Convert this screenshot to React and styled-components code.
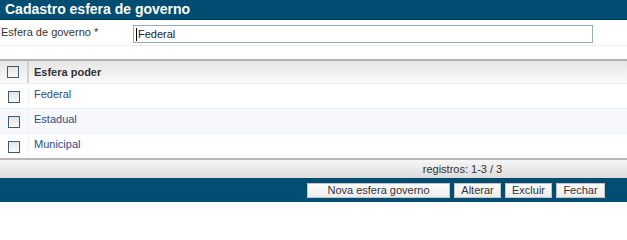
import React from 'react';
import styled, { createGlobalStyle } from 'styled-components';

const GlobalStyle = createGlobalStyle`
  body {
    margin: 0;
    background: #fff;
    font-family: "Liberation Sans", Arial, sans-serif;
    font-size: 11px;
    color: #333;
  }
`;

const Page = styled.div`
  width: 627px;
  display: flex;
  flex-direction: column;
`;

const TitleBar = styled.div`
  height: 19px;
  background: #024e73;
  border-bottom: 1px solid #013a57;
  color: #fff;
  font-weight: bold;
  font-size: 14px;
  line-height: 19px;
  padding-left: 5px;
`;

const FormRow = styled.div`
  display: flex;
  align-items: flex-start;
  height: 25px;
  padding-top: 4px;
  box-sizing: border-box;
  border-bottom: 1px solid #eeeeee;
  margin-top: 1px;
`;

const Label = styled.div`
  width: 133px;
  padding-left: 1px;
  padding-top: 1px;
  box-sizing: border-box;
`;

const Field = styled.div`
  width: 460px;
  height: 18px;
  box-sizing: border-box;
  border: 1px solid #93aabf;
  display: flex;
  align-items: center;
  padding-left: 2px;
  color: #222;
`;

const Caret = styled.span`
  width: 1px;
  height: 13px;
  background: #000;
  margin-right: 1px;
`;

const Table = styled.div`
  margin-top: 13px;
  border-top: 2px solid #b1b1b1;
  border-bottom: 2px solid #b7b7b7;
`;

const Row = styled.div`
  display: flex;
  height: ${({ $header }) => ($header ? '22px' : '25px')};
  background: ${({ $header, $alt }) =>
    $header ? 'linear-gradient(#e5e5e5, #fafafa)' : $alt ? '#f6f8fb' : '#fff'};
  border-top: ${({ $header }) => ($header ? 'none' : '1px solid #edf0f4')};
  box-sizing: border-box;
`;

const CheckCell = styled.div`
  width: 29px;
  box-sizing: border-box;
  border-right: ${({ $header }) => ($header ? '2px solid #d2d2d2' : '1px solid #f1f3f6')};
  display: flex;
  justify-content: center;
  align-items: ${({ $header }) => ($header ? 'center' : 'flex-start')};
  padding-top: ${({ $header }) => ($header ? '0' : '7px')};
  padding-right: 1px;
`;

const Box = styled.span`
  width: 12px;
  height: 12px;
  box-sizing: border-box;
  border: 1px solid #3f5b74;
  background: linear-gradient(#e4e4e4, #f8f8f8);
`;

const Cell = styled.div`
  flex: 1;
  padding-left: 5px;
  display: flex;
  align-items: ${({ $header }) => ($header ? 'center' : 'flex-start')};
  padding-top: ${({ $header }) => ($header ? '0' : '4px')};
  font-weight: ${({ $header }) => ($header ? 'bold' : 'normal')};
  color: ${({ $header }) => ($header ? '#333' : '#2a4d88')};
`;

const Footer = styled.div`
  height: 18px;
  background: linear-gradient(#f6f6f6, #dcdcdc);
  display: flex;
  align-items: center;
  justify-content: center;
  padding-left: 298px;
  color: #333;
`;

const ActionBar = styled.div`
  height: 24px;
  background: #024e73;
  display: flex;
  justify-content: flex-end;
  align-items: flex-start;
  gap: 4px;
  padding: 5px 22px 0 0;
  box-sizing: border-box;
`;

const Button = styled.button`
  height: 15px;
  width: ${({ $w }) => $w}px;
  padding: 0;
  border: 1px solid #c4c4c4;
  background: linear-gradient(#fdfdfd, #ececec);
  font-family: "Liberation Sans", Arial, sans-serif;
  font-size: 11px;
  color: #333;
  line-height: 13px;
`;

const rows = ['Federal', 'Estadual', 'Municipal'];

export default function App() {
  return (
    <Page>
      <GlobalStyle />
      <TitleBar>Cadastro esfera de governo</TitleBar>
      <FormRow>
        <Label>Esfera de governo *</Label>
        <Field>
          <Caret />
          Federal
        </Field>
      </FormRow>
      <Table>
        <Row $header>
          <CheckCell $header>
            <Box />
          </CheckCell>
          <Cell $header>Esfera poder</Cell>
        </Row>
        {rows.map((name, i) => (
          <Row key={name} $alt={i === 1}>
            <CheckCell>
              <Box />
            </CheckCell>
            <Cell>{name}</Cell>
          </Row>
        ))}
      </Table>
      <Footer>registros: 1-3 / 3</Footer>
      <ActionBar>
        <Button $w={143}>Nova esfera governo</Button>
        <Button $w={47}>Alterar</Button>
        <Button $w={47}>Excluir</Button>
        <Button $w={49}>Fechar</Button>
      </ActionBar>
    </Page>
  );
}
